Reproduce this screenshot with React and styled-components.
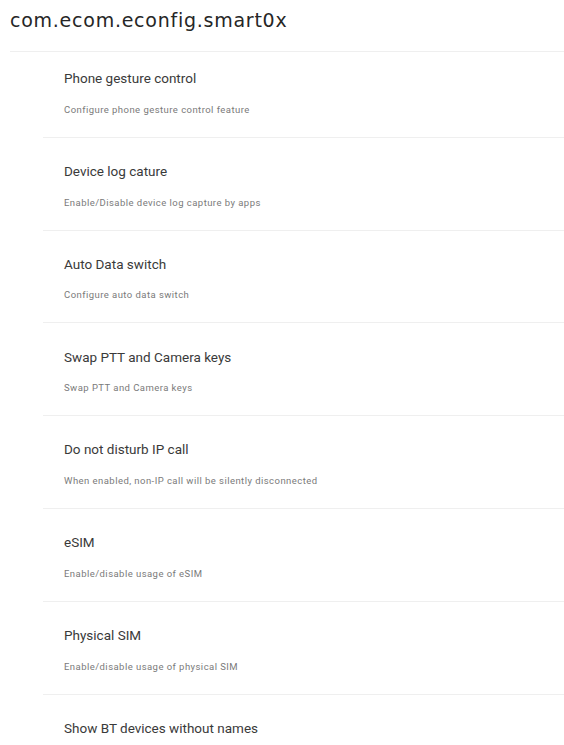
import React from 'react';
import styled, { createGlobalStyle } from 'styled-components';

const GlobalStyle = createGlobalStyle`
    html, body {
        margin: 0;
        padding: 0;
        background: #ffffff;
    }
    body {
        font-family: Roboto, 'Liberation Sans', sans-serif;
    }
`

const Page = styled.div`
    width: 564px;
    height: 745px;
    overflow: hidden;
    background: #fff;
`

const Header = styled.header`
    display: flex;
    align-items: center;
    height: 51px;
    margin-left: 10px;
    border-bottom: 1.5px solid #efefef;
`

const PackageName = styled.h1`
    margin: 0 0 11px;
    font-family: 'DejaVu Sans', sans-serif;
    font-size: 19px;
    font-weight: 400;
    letter-spacing: 0.75px;
    color: #262626;
`

const List = styled.ul`
    list-style: none;
    margin: 0 0 0 43px;
    padding: 0;
`

const Row = styled.li`
    display: flex;
    flex-direction: column;
    padding: ${p => (p.$first ? '16.3px' : '23.3px')} 0 20px 21px;
    border-bottom: 1.5px solid #efefef;
`

const Title = styled.span`
    font-size: 13.5px;
    line-height: 20px;
    color: #3a3a3a;
`

const Summary = styled.span`
    margin-top: 14.5px;
    font-size: 9.5px;
    line-height: 14px;
    letter-spacing: 0.45px;
    color: #7a7a7a;
`

const settings = [
    ['Phone gesture control', 'Configure phone gesture control feature'],
    ['Device log cature', 'Enable/Disable device log capture by apps'],
    ['Auto Data switch', 'Configure auto data switch'],
    ['Swap PTT and Camera keys', 'Swap PTT and Camera keys'],
    ['Do not disturb IP call', 'When enabled, non-IP call will be silently disconnected'],
    ['eSIM', 'Enable/disable usage of eSIM'],
    ['Physical SIM', 'Enable/disable usage of physical SIM'],
    ['Show BT devices without names'],
]

const App = () => {
    return (
        <Page>
            <GlobalStyle />
            <Header>
                <PackageName>com.ecom.econfig.smart0x</PackageName>
            </Header>
            <List>
                {settings.map(([title, summary], i) => (
                    <Row key={title} $first={i === 0}>
                        <Title>{title}</Title>
                        {summary && <Summary>{summary}</Summary>}
                    </Row>
                ))}
            </List>
        </Page>
    )
}

export default App;
